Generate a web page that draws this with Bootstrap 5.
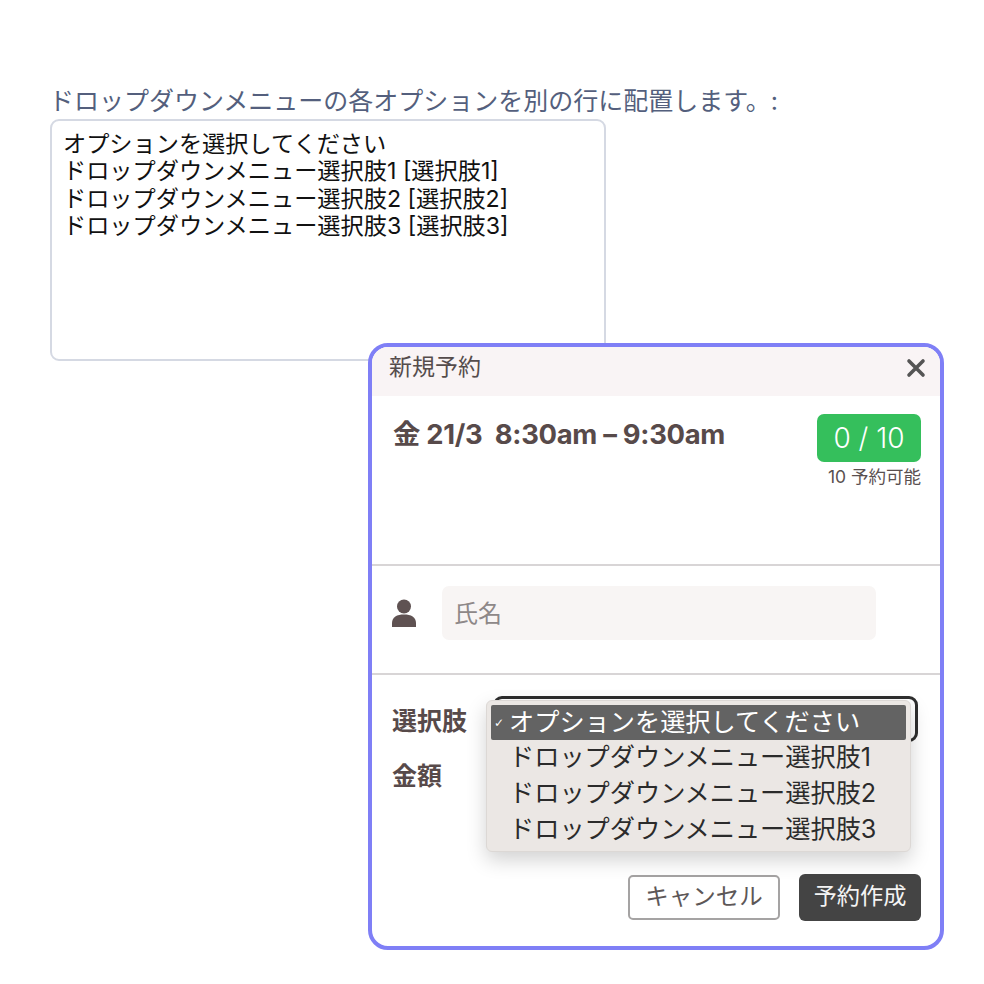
<!DOCTYPE html>
<html lang="ja">
<head>
<meta charset="utf-8">
<title>予約</title>
<link rel="stylesheet" href="https://cdn.jsdelivr.net/npm/bootstrap@5.3.0/dist/css/bootstrap.min.css">
<style>
html,body{height:100%}
body{font-family:Inter,"Noto Sans CJK JP",sans-serif;background:#fff;position:relative;overflow:hidden}
.page-wrap{padding:83px 0 0 49px;width:606px}
.top-label{font-size:25px;line-height:36px;color:#545f7d;white-space:nowrap;margin:0 0 1px}
.opt-area.form-control{height:242px;width:556px;margin-left:1px;border:2px solid #d5d9e3;border-radius:9px;font-size:23.2px;line-height:27.3px;color:#111;padding:10px 12px 10px 11px;resize:none;margin-top:-1px;font-family:inherit;overflow:hidden}
.booking{position:absolute;left:368px;top:343px;width:576px;height:607px;border:4px solid #7f7ff6;border-radius:20px;background:#fff;color:#574a4a;overflow:hidden}
.booking-head{height:49px;background:#f9f4f5;padding:0 14px 8px 17px;font-size:23px;color:#554c4c}
.booking-slot{height:170px;padding:18px 19px 0 21px;border-bottom:2px solid #d8d5d6}
.slot-title{font-size:27.4px;font-weight:700;line-height:41px;letter-spacing:-.3px;white-space:pre}
.seat-badge{width:104px;height:48px;background:#35bf5c;color:#fff;border-radius:7px;font-size:28px;line-height:48px;text-align:center;font-weight:300}
.seat-note{font-size:17.5px;line-height:30px;text-align:right;color:#5a5050;white-space:nowrap}
.booking-name{height:109px;padding:0 0 13px 20px;border-bottom:2px solid #d8d5d6;gap:26px}
.name-input.form-control{width:434px;height:54px;background:#f8f5f4;border:0;border-radius:7px;font-size:24px;padding:0 12px;font-family:inherit}
.name-input.form-control::placeholder{color:#8e8888}
.booking-opts{padding:21px 19px 0 20px;position:relative}
.opt-label{font-size:25px;font-weight:700;color:#574a4a;line-height:36px;width:103px;flex:none;margin-top:7px}
.opt-line{height:55px}
.opt-select.form-select{width:425px;height:46px;border:3px solid #2e2e2e;border-radius:9px;background-image:none;background-color:#fff;box-shadow:none;margin-left:-2px}
.opt-menu.dropdown-menu{left:114px;top:25px;width:425px;height:152px;background:#ebe7e4;border:1px solid #dcd8d5;border-radius:6px;padding:4px 4px 0 4px;box-shadow:0 8px 20px rgba(0,0,0,.18);margin:0;font-size:25.2px}
.opt-menu .dropdown-item{height:36px;line-height:35px;padding:0 0 0 18px;color:#2b2b2b;position:relative;white-space:nowrap;border-radius:2px}
.opt-menu .dropdown-item.active{background:#636363;color:#fff;height:35px}
.tick{position:absolute;left:3px;top:1px;font-size:12px;font-family:"DejaVu Sans",sans-serif}
.booking-foot{position:absolute;right:19px;bottom:25px;gap:19px}
.act-cancel.btn{width:152px;height:45px;border:2px solid #a5a3a3;border-radius:5px;background:#fff;color:#5d5757;font-size:23.5px;line-height:1;padding:0 0 2px}
.act-create.btn{width:122px;height:47px;border:0;border-radius:6px;background:#444;color:#f4f4f4;font-size:23.200px;line-height:1;padding:0 0 2px}
</style>
</head>
<body>
<div class="page-wrap">
  <label class="top-label form-label" for="opts">ドロップダウンメニューの各オプションを別の行に配置します。:</label>
  <textarea id="opts" class="form-control opt-area" rows="8">オプションを選択してください
ドロップダウンメニュー選択肢1 [選択肢1]
ドロップダウンメニュー選択肢2 [選択肢2]
ドロップダウンメニュー選択肢3 [選択肢3]</textarea>
</div>

<section class="booking d-flex flex-column">
  <div class="booking-head d-flex justify-content-between align-items-center">
    <span>新規予約</span>
    <svg width="20" height="20" viewBox="0 0 20 20" aria-label="閉じる"><path d="M3 3 17 17M17 3 3 17" stroke="#555" stroke-width="3.6" stroke-linecap="round" fill="none"/></svg>
  </div>
  <div class="booking-slot d-flex justify-content-between align-items-start">
    <div class="slot-title">金 21/3  8:30am – 9:30am</div>
    <div>
      <div class="seat-badge">0 / 10</div>
      <div class="seat-note">10 予約可能</div>
    </div>
  </div>
  <div class="booking-name d-flex align-items-center">
    <svg width="24" height="28" viewBox="0 0 24 28"><circle cx="12" cy="7.500" r="7" fill="#5f5252"/><path d="M0 28v-4c0-6 5-8.500 12-8.500s12 2.500 12 8.500v4z" fill="#5f5252"/></svg>
    <input class="form-control name-input" type="text" placeholder="氏名">
  </div>
  <div class="booking-opts flex-grow-1">
    <div class="opt-line d-flex align-items-start">
      <span class="opt-label">選択肢</span>
      <select class="form-select opt-select" aria-label="選択肢"><option></option></select>
    </div>
    <div class="opt-line d-flex align-items-start">
      <span class="opt-label">金額</span>
    </div>
    <ul class="dropdown-menu show opt-menu list-unstyled">
      <li><a class="dropdown-item active" href="#"><span class="tick">✓</span>オプションを選択してください</a></li>
      <li><a class="dropdown-item" href="#">ドロップダウンメニュー選択肢1</a></li>
      <li><a class="dropdown-item" href="#">ドロップダウンメニュー選択肢2</a></li>
      <li><a class="dropdown-item" href="#">ドロップダウンメニュー選択肢3</a></li>
    </ul>
    <div class="booking-foot d-flex align-items-center">
      <button class="btn act-cancel" type="button">キャンセル</button>
      <button class="btn act-create" type="button">予約作成</button>
    </div>
  </div>
</section>
<script src="https://cdn.jsdelivr.net/npm/bootstrap@5.3.0/dist/js/bootstrap.bundle.min.js"></script>
</body>
</html>
